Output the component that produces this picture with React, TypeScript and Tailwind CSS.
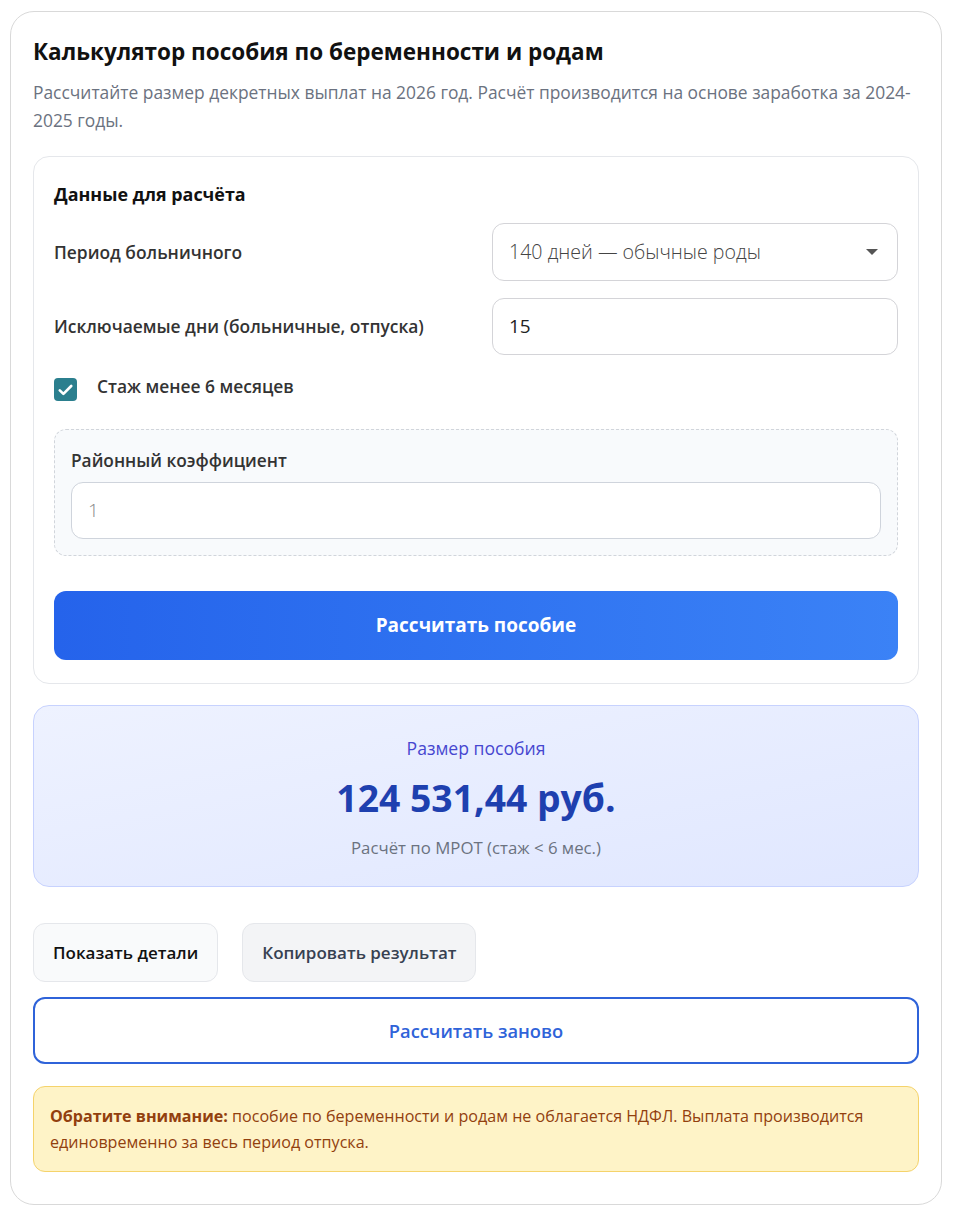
import React from "react";

export default function App() {
  return (
    <div
      className="min-h-screen bg-white pl-[10px] pr-[14px] pt-[11px] pb-[10px]"
      style={{ fontFamily: '"Open Sans", "Noto Sans", "Liberation Sans", sans-serif' }}
    >
      <div className="rounded-[24px] border border-[#d9d9d9] bg-white px-[22px] pt-[26px] pb-[32px]">
        <h1 className="text-[22.5px] font-bold leading-[28px] text-[#111]">
          Калькулятор пособия по беременности и родам
        </h1>
        <p className="mt-[12px] text-[17.4px] leading-[28px] text-[#6b7280]">
          Рассчитайте размер декретных выплат на 2026 год. Расчёт производится на основе заработка за 2024-2025 годы.
        </p>

        <div className="mt-[22px] rounded-[16px] border border-[#e5e7eb] bg-white px-[20px] pt-[24px] pb-[23px]">
          <h2 className="text-[17.9px] font-bold leading-[26px] text-[#111]">Данные для расчёта</h2>

          <div className="mt-[16px] flex items-center gap-[22px]">
            <label className="flex-1 text-[17.4px] font-semibold text-[#333]">Период больничного</label>
            <div className="relative flex h-[58px] w-[406px] items-center rounded-[12px] border border-[#d4d4d8] bg-white pl-[16px] pr-[16px]">
              <span className="flex-1 text-[19.6px] font-light text-[#444]">140 дней — обычные роды</span>
              <svg width="14" height="8" viewBox="0 0 14 8" className="mr-[2px]">
                <path d="M1 1h12L7 7z" fill="#555" />
              </svg>
            </div>
          </div>

          <div className="mt-[17px] flex items-center gap-[22px]">
            <label className="flex-1 text-[17.4px] font-semibold text-[#333]">
              Исключаемые дни (больничные, отпуска)
            </label>
            <div className="flex h-[57px] w-[406px] items-center rounded-[12px] border border-[#d4d4d8] bg-white px-[16px]">
              <span className="text-[19px] text-[#222]">15</span>
            </div>
          </div>

          <div className="mt-[23px] flex items-center gap-[20px]">
            <span className="flex h-[23px] w-[23px] items-center justify-center rounded-[4px] bg-[#2b7f8e]">
              <svg width="15" height="12" viewBox="0 0 15 12">
                <path d="M1.8 6.3l3.6 3.6L13.2 2" stroke="white" strokeWidth="2.6" fill="none" strokeLinecap="round" strokeLinejoin="round" />
              </svg>
            </span>
            <span className="-mt-[6px] text-[17.4px] font-semibold text-[#333]">Стаж менее 6 месяцев</span>
          </div>

          <div className="mt-[28px] rounded-[12px] border border-dashed border-[#d1d5db] bg-[#f8fafc] px-[16px] pt-[18px] pb-[16px]">
            <label className="block text-[17.3px] font-semibold leading-[26px] text-[#333]">Районный коэффициент</label>
            <div className="mt-[8px] flex h-[57px] items-center rounded-[12px] border border-[#cfd4dc] bg-white px-[16px]">
              <span className="text-[19px] font-light text-[#888]">1</span>
            </div>
          </div>

          <button className="mt-[35px] flex h-[69px] w-full items-center justify-center rounded-[12px] bg-gradient-to-r from-[#2563eb] to-[#3b82f6] text-[19px] font-bold text-white">
            Рассчитать пособие
          </button>
        </div>

        <div className="mt-[21px] flex flex-col items-center rounded-[16px] border border-[#c7d2fe] bg-gradient-to-br from-[#eef2ff] to-[#e0e7ff] pt-[30px] pb-[26px]">
          <div className="text-[17.6px] leading-[24px] text-[#4646d0]">Размер пособия</div>
          <div className="mt-[15px] text-[37.3px] font-bold leading-[46px] text-[#1e40af]">124 531,44 руб.</div>
          <div className="mt-[15px] text-[16.8px] leading-[24px] text-[#6b7280]">Расчёт по МРОТ (стаж &lt; 6 мес.)</div>
        </div>

        <div className="mt-[36px] flex gap-[24px]">
          <button className="h-[59px] rounded-[12px] border border-[#e5e7eb] bg-[#f9fafb] px-[19px] text-[17px] font-semibold text-[#111]">
            Показать детали
          </button>
          <button className="h-[59px] rounded-[12px] border border-[#e5e7eb] bg-[#f3f4f6] px-[19px] text-[17px] font-semibold text-[#374151]">
            Копировать результат
          </button>
        </div>

        <button className="mt-[15px] flex h-[67px] w-full items-center justify-center rounded-[12px] border-2 border-[#2f63d9] bg-white text-[18.3px] font-semibold text-[#2f63d9]">
          Рассчитать заново
        </button>

        <div className="mt-[22px] rounded-[12px] border border-[#f5d36b] bg-[#fef3c7] px-[16px] py-[16px] text-[16.1px] leading-[26px] text-[#92400e]">
          <b className="font-bold">Обратите внимание:</b> пособие по беременности и родам не облагается НДФЛ. Выплата производится единовременно за весь период отпуска.
        </div>
      </div>
    </div>
  );
}
